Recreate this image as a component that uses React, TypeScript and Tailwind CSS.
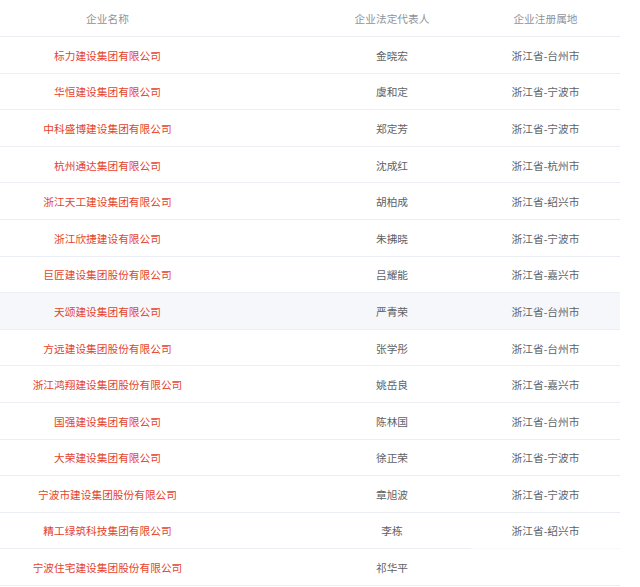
const rows: [string, string, string][] = [
  ["标力建设集团有限公司", "金晓宏", "浙江省-台州市"],
  ["华恒建设集团有限公司", "虞和定", "浙江省-宁波市"],
  ["中科盛博建设集团有限公司", "郑定芳", "浙江省-宁波市"],
  ["杭州通达集团有限公司", "沈成红", "浙江省-杭州市"],
  ["浙江天工建设集团有限公司", "胡柏成", "浙江省-绍兴市"],
  ["浙江欣捷建设有限公司", "朱拂晓", "浙江省-宁波市"],
  ["巨匠建设集团股份有限公司", "吕耀能", "浙江省-嘉兴市"],
  ["天颂建设集团有限公司", "严青荣", "浙江省-台州市"],
  ["方远建设集团股份有限公司", "张学彤", "浙江省-台州市"],
  ["浙江鸿翔建设集团股份有限公司", "姚岳良", "浙江省-嘉兴市"],
  ["国强建设集团有限公司", "陈林国", "浙江省-台州市"],
  ["大荣建设集团有限公司", "徐正荣", "浙江省-宁波市"],
  ["宁波市建设集团股份有限公司", "章旭波", "浙江省-宁波市"],
  ["精工绿筑科技集团有限公司", "李栋", "浙江省-绍兴市"],
  ["宁波住宅建设集团股份有限公司", "祁华平", ""],
];

const font = { fontFamily: '"Noto Sans CJK SC", "Noto Sans", sans-serif' };

export default function App() {
  return (
    <div className="w-[640px] h-[587px] bg-white overflow-hidden" style={font}>
      <div className="w-[620px] text-[10.7px]">
        <div className="grid grid-cols-[215px_98px_158px_149px] h-[37px] pt-[2px] items-center border-b border-[#ebeef5] text-[#909399]">
          <div className="text-center">企业名称</div>
          <div />
          <div className="text-center">企业法定代表人</div>
          <div className="text-center">企业注册属地</div>
        </div>
        {rows.map(([name, person, place], i) => {
          const last14 = i === 13;
          const b = last14 ? "border-b border-[#ebeef5]" : "";
          return (
            <div
              key={i}
              className={
                "grid grid-cols-[215px_98px_158px_149px] h-[36.6px] " +
                (i === 7 ? "bg-[#f5f7fa] " : "") +
                (last14 ? "" : "border-b border-[#ebeef5]")
              }
            >
              <div className={"text-[#e4432c] h-full pt-[2px] flex items-center justify-center " + b}>
                {name}
              </div>
              <div className={"h-full " + b} />
              <div className={"text-[#606266] h-full pt-[2px] flex items-center justify-center " + b}>
                {person}
              </div>
              <div className={"text-[#606266] h-full pt-[2px] flex items-center justify-center " + (last14 ? "border-b border-[#f7f8fb]" : "")}>
                {place}
              </div>
            </div>
          );
        })}
      </div>
    </div>
  );
}
